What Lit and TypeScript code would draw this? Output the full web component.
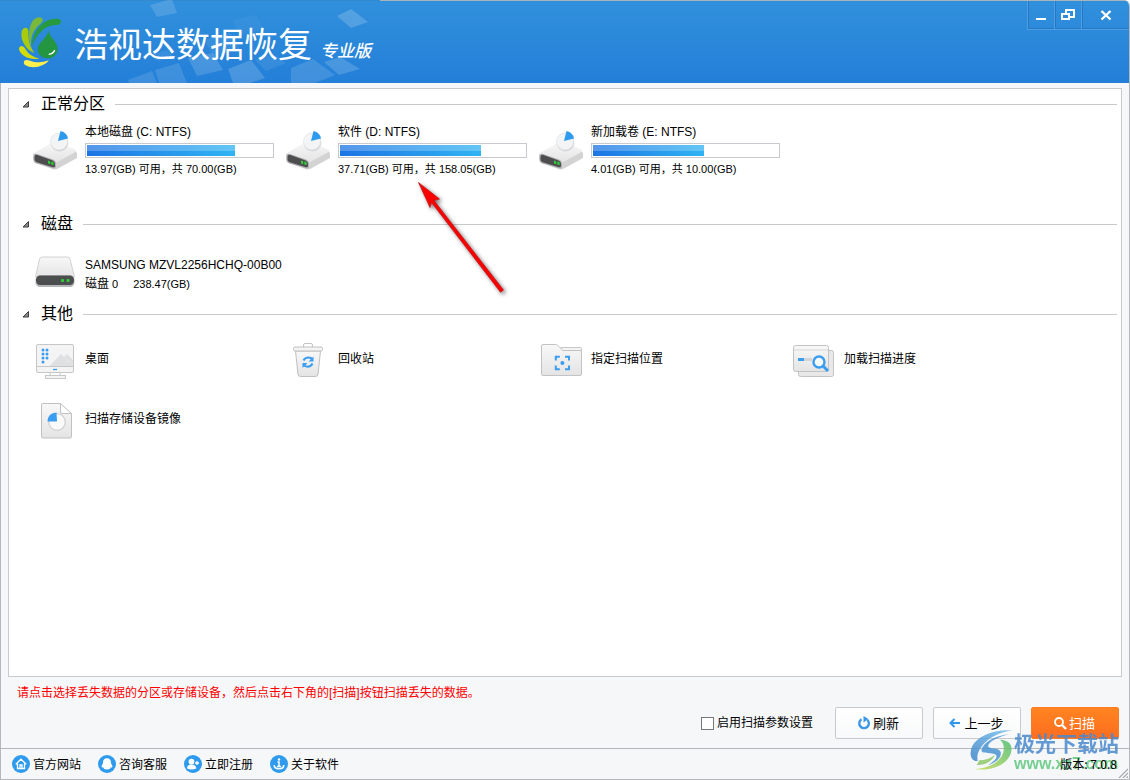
import { LitElement, html, css, svg } from "lit";
import { customElement, property } from "lit/decorators.js";

type IconName = "volume" | "disk" | "desktop" | "bin" | "folder" | "progress" | "image";

interface Volume {
  name: string;
  total: number;
  free: number;
}

const volumes: Volume[] = [
  { name: "本地磁盘 (C: NTFS)", total: 70, free: 13.97 },
  { name: "软件 (D: NTFS)", total: 158.05, free: 37.71 },
  { name: "新加载卷 (E: NTFS)", total: 10, free: 4.01 },
];

const others: { icon: IconName; label: string }[] = [
  { icon: "desktop", label: "桌面" },
  { icon: "bin", label: "回收站" },
  { icon: "folder", label: "指定扫描位置" },
  { icon: "progress", label: "加载扫描进度" },
  { icon: "image", label: "扫描存储设备镜像" },
];

const deviceIcons = {
  volume: svg`
    <path d="M0 24 20 13q2-1 4 0l18 8q2 1 2 3v4L25 38.500q-2 1.500-5 .8L3 33q-3-1.200-3-5z" fill="#d3d3d4"/>
    <path d="M1 23 21 11.500q1.500-.8 3.500 0L42 19.500q2.500 1 0 2.800L24.500 32Q22 33 19 32L2 26q-2.500-1.200-1-3z" fill="url(#top)"/>
    <path d="M.5 26.500q0-3.500 3.500-2.500l16 5.500q3 1.200 3 4.500v2.500q0 2.500-3 1.700L3.500 33.500Q.5 32.500.5 29.500z" fill="#b0b1b2"/>
    <path d="M1.500 27q0-3 3-2l14.500 5.200q3 1.200 3 4v1.500q0 2.200-3 1.400L4.500 32.500q-3-1-3-3.500z" fill="#4d4d4f"/>
    <path d="M15 30.500l2.200.7v3l-2.200-.7zM18.300 31.500l2.300.7v3l-2.300-.7z" fill="#2fce38"/>
    <ellipse cx="26.500" cy="13" rx="8.800" ry="8.500" fill="#cfd0d2" opacity=".8"/>
    <circle cx="26" cy="11.500" r="8.500" fill="#f3f4f5" stroke="#dcdddf" stroke-width=".6"/>
    <path d="M25 11 27.500 1q6.500 1.500 7.500 7.500z" fill="#2f9bee"/>`,
  disk: svg`
    <path d="M6.500 6q.7-2 3-2h24.500q2.500 0 3 2L41.500 24H2.500z" fill="url(#top)" stroke="#d2d2d3" stroke-width="1"/>
    <rect x="2.500" y="22.500" width="39" height="11.500" rx="4.500" fill="#b4b5b6"/>
    <rect x="3" y="22.500" width="38" height="9.500" rx="4.200" fill="#4c4d4f"/>
    <rect x="28" y="26" width="3" height="3" rx="1" fill="#2fce38"/>
    <rect x="33.500" y="26" width="3" height="3" rx="1" fill="#2fce38"/>`,
  desktop: svg`
    <rect x="3.500" y="6.500" width="37" height="28" rx="1.500" fill="#f4f4f5" stroke="#c6c7c9"/>
    <path d="M16 28.500 28 16l8 8 2-1 2 3v2.500zM31 19l3-3 6 6v4z" fill="#dfe0e2"/>
    <path d="M4 28.500h36M17 34.500v3.500h10v-3.500" fill="none" stroke="#c6c7c9"/>
    <rect x="12.500" y="37.500" width="20" height="3" fill="#f3f3f4" stroke="#c6c7c9"/>
    <path d="M20 31.500h4" stroke="#3a9df0" stroke-width="1.300"/>
    ${[12, 16, 20, 24].map((y) => svg`<circle cx="10" cy=${y} r="1.500" fill="#3a9df0"/>`)}
    ${[12, 16, 20].map((y) => svg`<circle cx="14" cy=${y} r="1.500" fill="#3a9df0"/>`)}`,
  bin: svg`
    <path d="M17.500 9V7q0-1.500 1.500-1.500h6q1.500 0 1.500 1.500v2" fill="none" stroke="#c2c3c5"/>
    <path d="M9.500 13 12 36.500q.3 2 2.500 2h15q2.200 0 2.500-2L34.500 13z" fill="url(#top)" stroke="#bfc0c2"/>
    <rect x="7.500" y="9" width="29" height="4" rx="1.500" fill="#f4f4f5" stroke="#bfc0c2"/>
    <path d="M17.500 22.500q1.500-3 5-3 2.500 0 4 2M26.500 25.500q-1.500 3.200-5 3.200-2.500 0-4-2" fill="none" stroke="#3a9df0" stroke-width="2"/>
    <path d="M27.500 18.500v5h-5zM16.500 30v-5h5z" fill="#3a9df0"/>`,
  folder: svg`
    <path d="M22 9.500h19q1.500 0 1.500 1.500v10h-20z" fill="#f4f4f5" stroke="#c6c7c9"/>
    <path d="M2.500 36.500V8q0-1.500 1.500-1.500h12.500q1.500 0 2.500 1.200L24 12.500h17q1.500 0 1.500 1.500v22q0 1.500-1.500 1.500H4q-1.500 0-1.500-1z" fill="url(#top)" stroke="#c2c3c5"/>
    <path d="M16.800 22.500v-3.700h4M26 18.800h4v3.700M30 27.500v3.700h-4M20.800 31.200h-4v-3.700" fill="none" stroke="#3a9df0" stroke-width="2"/>
    <circle cx="23.400" cy="25" r="2" fill="#3a9df0"/>`,
  progress: svg`
    <rect x="6.500" y="12.500" width="35" height="26" rx="2" fill="#e8e8e9" stroke="#c2c3c5"/>
    <rect x="1.500" y="7.500" width="35" height="26" rx="2" fill="url(#top)" stroke="#c2c3c5"/>
    <path d="M2 12h34" stroke="#d6d7d9"/>
    <path d="M6 21.500h6" stroke="#3a9df0" stroke-width="3"/>
    <path d="M12 21.500h8" stroke="#d3d4d6" stroke-width="3"/>
    <circle cx="27" cy="24" r="5.500" fill="#f8fafc" stroke="#3a9df0" stroke-width="2.400"/>
    <path d="M31 28l5 5" stroke="#3a9df0" stroke-width="3"/>`,
  image: svg`
    <path d="M10 5.500h17L38.500 16v22.500q0 1.500-1.500 1.500H10q-1.500 0-1.500-1.500V7q0-1.500 1.500-1.500z" fill="url(#top)" stroke="#bfc0c2"/>
    <path d="M27.500 5.500v8.500q0 1.500 1.500 1.500h9.500z" fill="#fff" stroke="#bfc0c2"/>
    <circle cx="24" cy="24" r="8.300" fill="#fafafb" stroke="#cfd0d2" stroke-width="1.300"/>
    <path d="M24 23.500h-9.500q.3-8.500 9-9z" fill="#3a9df0"/>`,
};

@customElement("device-icon")
export class DeviceIcon extends LitElement {
  @property() name: IconName = "volume";

  static styles = css`
    :host { display: block; flex: none; }
    .glyph { display: block; width: 44px; height: 42px; }
  `;

  render() {
    return html`<svg class="glyph" viewBox="0 0 44 42" aria-hidden="true">
      <defs>
        <linearGradient id="top" x1="0" y1="0" x2="0" y2="1">
          <stop offset="0" stop-color="#f8f8f8" />
          <stop offset="1" stop-color="#e4e4e5" />
        </linearGradient>
      </defs>
      ${deviceIcons[this.name]}
    </svg>`;
  }
}

@customElement("device-section")
export class DeviceSection extends LitElement {
  @property() heading = "";

  static styles = css`
    :host { display: block; }
    .heading {
      display: flex;
      align-items: center;
      height: 25px;
      margin: 0;
      padding: 0 4px 0 13px;
      font-size: 16px;
      font-weight: 400;
      line-height: 22px;
    }
    .toggle {
      display: flex;
      align-items: center;
      gap: 11px;
      padding: 0 0 2px;
      border: 0;
      background: none;
      color: #000;
      font: inherit;
    }
    .marker { display: block; width: 8px; height: 8px; }
    .rule { flex: 1; height: 1px; margin-left: 10px; background: #c9c9cb; }
    .grid {
      display: grid;
      grid-template-columns: repeat(auto-fill, 253px);
      padding-left: 24px;
    }
  `;

  render() {
    return html`
      <h2 class="heading">
        <button class="toggle" type="button" aria-expanded="true">
          <svg class="marker" viewBox="0 0 8 8" aria-hidden="true">
            <path d="M6.500 1.500V7H1z" fill="#8a8a8a" stroke="#3e3e3e" />
          </svg>
          ${this.heading}
        </button>
        <span class="rule"></span>
      </h2>
      <div class="grid"><slot></slot></div>
    `;
  }
}

const footLinks = [
  {
    label: "官方网站",
    glyph: svg`<path d="M3.800 9.200 9 4.200l5.200 5M5.500 8.500v5h7v-5M8 13.500V10h2v3.500" fill="none" stroke="#fff" stroke-width="1.300"/>`,
  },
  {
    label: "咨询客服",
    glyph: svg`<path d="M9 3.300c3 0 4 2.200 4 4.500 0 1.500 1.400 2.200 1.400 3.700 0 1.200-1.400 1-1.700.7-.3 1.300-1.200 2.300-3.700 2.300s-3.400-1-3.700-2.300c-.3.300-1.700.5-1.700-.7C3.600 10 5 9.300 5 7.800c0-2.300 1-4.500 4-4.500z" fill="#fff"/>`,
  },
  {
    label: "立即注册",
    glyph: svg`<circle cx="7.500" cy="6.600" r="2.900" fill="#fff"/><path d="M3 13.600q0-4 4.500-4t4.800 4q-4.600 1.700-9.300 0z" fill="#fff"/><path d="M13 5.500v5M10.500 8h5" stroke="#2f9bee" stroke-width="3"/><path d="M13 6v4M11 8h4" stroke="#fff" stroke-width="1.300"/>`,
  },
  {
    label: "关于软件",
    glyph: svg`<circle cx="9" cy="4.500" r="1.200" fill="#fff"/><path d="M7.500 7H9v4.500M7 11.500h4" fill="none" stroke="#fff" stroke-width="1.500"/><path d="M4.200 10q0 3.800 4.800 3.800t4.800-3.800" fill="none" stroke="#fff" stroke-width="1.500"/>`,
  },
];

@customElement("app-root")
export class AppRoot extends LitElement {
  static styles = css`
    :host {
      display: block;
      background: #fff;
      color: #000;
      font: 12px/18px "Liberation Sans", "Noto Sans CJK SC", sans-serif;
    }
    * { box-sizing: border-box; }
    .window {
      position: relative;
      display: flex;
      flex-direction: column;
      min-height: 100vh;
      border: solid #b5b7ba;
      border-width: 0 1px 1px 0;
      border-top-right-radius: 6px;
      background: #f5f7f9;
      overflow: hidden;
    }
    .banner {
      position: relative;
      display: flex;
      align-items: center;
      height: 83px;
      padding-left: 18px;
      border-top: 1px solid #a9b3bc;
      background: linear-gradient(#3190dc, #237fd8);
      color: #fff;
    }
    .tiles { position: absolute; left: 0; top: -1px; width: 380px; height: 83px; }
    .logo { position: relative; width: 44px; height: 52px; }
    .brand {
      position: relative;
      display: flex;
      align-items: baseline;
      gap: 8px;
      margin: 8px 0 0 12px;
      font-family: "Noto Sans CJK SC", sans-serif;
      font-size: 34px;
      line-height: 48px;
      font-weight: 400;
    }
    .edition { font-size: 17px; font-style: italic; font-weight: 500; }
    .controls {
      display: flex;
      align-self: flex-start;
      height: 29px;
      margin-left: auto;
      border-bottom: 1px solid #4d9fe2;
      box-shadow: inset 0 -1px #2678c6;
    }
    .control {
      display: grid;
      place-items: center;
      width: 27px;
      padding: 0;
      border: 0;
      border-left: 1px solid #4d9fe2;
      background: none;
      box-shadow: inset 1px 0 #2678c6;
    }
    .control.close { width: 48px; }
    .control svg { display: block; width: 14px; height: 14px; }
    .body {
      display: flex;
      flex: 1;
      flex-direction: column;
      padding: 5px 7px 9px;
      border-left: 1px solid #b5b7ba;
    }
    .panel {
      position: relative;
      flex: 1;
      padding-top: 3px;
      border: 1px solid #c8cacd;
      background: #fff;
    }
    .volumes { padding-bottom: 34px; }
    .disks { padding-bottom: 7px; }
    .item {
      display: flex;
      align-items: center;
      gap: 8px;
      padding: 0;
      border: 0;
      background: none;
      color: #000;
      font: inherit;
      text-align: left;
    }
    .item.volume { padding-top: 6px; }
    .item.disk { padding-top: 16px; }
    .item.other { height: 60px; padding-top: 4px; }
    .lines { display: grid; gap: 2px; }
    .item.disk .lines { gap: 1px; }
    .small { font-size: 11px; }
    .serial { display: flex; gap: 3px; }
    .size { margin-left: 12px; }
    .meter {
      display: block;
      width: 189px;
      height: 15px;
      padding: 1px;
      border: 1px solid #c9cacf;
      background: #fff;
    }
    .fill {
      display: block;
      height: 11px;
      background:
        linear-gradient(rgba(255, 255, 255, 0.24) 50%, transparent 50%),
        linear-gradient(90deg, #1d74e4, #30b4f3);
    }
    .arrow {
      position: absolute;
      left: 400px;
      top: 86px;
      width: 110px;
      height: 126px;
      pointer-events: none;
    }
    .hint { margin: 7px 0 0; padding-left: 9px; color: #f00; }
    .actions {
      display: flex;
      align-items: center;
      justify-content: flex-end;
      gap: 10px;
      margin: 5px 3px 0 0;
    }
    .option { display: flex; align-items: center; gap: 3px; margin-right: 12px; }
    .check {
      appearance: none;
      width: 13px;
      height: 13px;
      margin: 0;
      border: 1px solid #777;
      background: #fff;
    }
    .action {
      display: flex;
      align-items: center;
      justify-content: center;
      gap: 2px;
      width: 88px;
      height: 32px;
      padding: 0 2px 0 0;
      border: 1px solid #c8cacd;
      border-radius: 2px;
      background: linear-gradient(#fff, #f8f9fa);
      color: #000;
      font: 13px/18px "Noto Sans CJK SC", sans-serif;
    }
    .action.primary {
      border-color: #ff7b22;
      background: linear-gradient(#ff8420, #ff6d20);
      color: #fff;
    }
    .action svg { width: 14px; height: 14px; }
    .foot {
      display: flex;
      align-items: center;
      gap: 17px;
      height: 31px;
      padding: 0 12px 0 11px;
      border-top: 1px solid #b5b7ba;
      border-left: 1px solid #b5b7ba;
      font-family: "Noto Sans CJK SC", sans-serif;
    }
    .link {
      display: flex;
      align-items: center;
      gap: 3px;
      color: #000;
      text-decoration: none;
    }
    .link svg { width: 18px; height: 18px; }
    .version { position: relative; z-index: 1; margin-left: auto; }
    .grip { position: absolute; right: 1px; bottom: 1px; width: 10px; height: 10px; }
    .stamp {
      position: absolute;
      right: 10px;
      bottom: 6px;
      display: flex;
      align-items: center;
      pointer-events: none;
      opacity: 0.85;
    }
    .swirl { width: 44px; height: 44px; }
    .stamp-text { display: grid; font-family: "Noto Sans CJK SC", sans-serif; }
    .stamp-name { color: #4a8ace; font-size: 21px; line-height: 26px; font-weight: 700; }
    .stamp-site { color: #5fc87d; font: 700 16px/18px "Liberation Sans", sans-serif; }
  `;

  render() {
    return html`
      <div class="window">
        <header class="banner">
          <svg class="tiles" viewBox="0 0 380 83" aria-hidden="true">
            <path d="M0 0h380v1H0z" fill="#3388cf" />
            <g fill="#fff">
              <path d="M150 5 172-1l5 14-20 4z" opacity=".14" />
              <path d="M337 16 351 9l17 13-17 6z" opacity=".18" />
              <path d="M128 80l24-9 5 12h-28z" opacity=".12" />
              <path d="M155 70l24-7 8 20h-28z" opacity=".12" />
              <path d="M151 55l16-5 8 8-18 3z" opacity=".08" />
              <path d="M188 58l25-5 10 17-26 6z" opacity=".15" />
              <path d="M205 40l25-7 10 16-27 7z" opacity=".07" />
              <path d="M228 69l23-9 14 18-15 5h-17z" opacity=".17" />
              <path d="M255 60l18-6 13 9-20 8z" opacity=".08" />
              <path d="M291 68l22-9 22 16-20 8h-24z" opacity=".13" />
              <path d="M324 62l16-5 20 12-21 6z" opacity=".16" />
              <path d="M232 20l24-5 8 14-24 7z" opacity=".04" />
            </g>
          </svg>
          <svg class="logo" viewBox="54 48 132 156" aria-hidden="true">
            <path d="M96 138C99 90 130 55 170 56q14 1 13 11-2 9-18 8c-28 1-52 22-69 63z" fill="#27993e" />
            <path d="M93 138C82 112 86 62 110 53q13-4 18 4 3 8-11 18c-17 15-25 36-24 63z" fill="#79b839" />
            <path d="M103 159C78 150 58 118 66 91q4-10 14-7 6 3 5 16c0 24 6 42 18 59z" fill="#a8cb0e" />
            <path d="M118 176C90 181 61 168 57 147q0-9 9-9 7 1 12 12 12 20 40 26z" fill="#d2dc0b" />
            <path d="M147 181c-16 21-52 27-73 13q-6-8 1-13 5-3 15 1c20 7 36 6 57-1z" fill="#fbf04d" />
            <path d="M145 90c3 23 28 35 28 57 0 17-13 28-29 28s-31-10-31-27c0-22 30-32 32-58z" fill="#249642" />
            <path d="M146 163q15-2 18-13" fill="none" stroke="#fff" stroke-width="4" />
          </svg>
          <h1 class="brand">浩视达数据恢复<span class="edition">专业版</span></h1>
          <div class="controls">
            <button class="control" type="button" aria-label="最小化">
              <svg viewBox="0 0 14 14"><path d="M2 11h10" stroke="#fff" stroke-width="2" /></svg>
            </button>
            <button class="control" type="button" aria-label="还原">
              <svg viewBox="0 0 14 14">
                <path d="M5 6V2h8v7H9M1 6h7v5H1z" fill="none" stroke="#fff" stroke-width="2" />
              </svg>
            </button>
            <button class="control close" type="button" aria-label="关闭">
              <svg viewBox="0 0 14 14"><path d="M2.500 3l9 8.500M11.500 3l-9 8.500" stroke="#fff" stroke-width="2.400" /></svg>
            </button>
          </div>
        </header>

        <main class="body">
          <div class="panel">
            <device-section class="volumes" heading="正常分区">
              ${volumes.map(
                (v) => html`
                  <button class="item volume" type="button">
                    <device-icon name="volume"></device-icon>
                    <span class="lines">
                      <span>${v.name}</span>
                      <span class="meter">
                        <span class="fill" style="width: ${Math.round((1 - v.free / v.total) * 100)}%"></span>
                      </span>
                      <span class="small">${v.free.toFixed(2)}(GB) 可用，共 ${v.total.toFixed(2)}(GB)</span>
                    </span>
                  </button>
                `,
              )}
            </device-section>
            <device-section class="disks" heading="磁盘">
              <button class="item disk" type="button">
                <device-icon name="disk"></device-icon>
                <span class="lines">
                  <span>SAMSUNG MZVL2256HCHQ-00B00</span>
                  <span class="serial">
                    <span>磁盘</span><span class="small">0</span><span class="small size">238.47(GB)</span>
                  </span>
                </span>
              </button>
            </device-section>
            <device-section class="others" heading="其他">
              ${others.map(
                (o) => html`
                  <button class="item other" type="button">
                    <device-icon name=${o.icon}></device-icon>
                    <span>${o.label}</span>
                  </button>
                `,
              )}
            </device-section>
            <svg class="arrow" viewBox="0 0 110 126" aria-hidden="true">
              <defs>
                <filter id="shade" x="-20%" y="-20%" width="140%" height="140%">
                  <feDropShadow dx="2" dy="2" stdDeviation="2" flood-color="#000" flood-opacity=".55" />
                </filter>
              </defs>
              <path
                d="M9.500 7.500 30.500 24l-5.500 1.500L94.500 115l-3 2.200L22.500 27.500 21 32.500z"
                fill="#fb0606" stroke="#b01010" stroke-width=".7" filter="url(#shade)"
              />
            </svg>
          </div>
          <p class="hint">请点击选择丢失数据的分区或存储设备，然后点击右下角的[扫描]按钮扫描丢失的数据。</p>
          <div class="actions">
            <label class="option"><input class="check" type="checkbox" />启用扫描参数设置</label>
            <button class="action" type="button">
              <svg viewBox="0 0 14 14" aria-hidden="true">
                <path d="M4.500 3.300A4.800 4.800 0 1 0 10.500 4" fill="none" stroke="#3a97e8" stroke-width="2.400" />
                <path d="M6.500 0v6.500l5-3.600z" fill="#3a97e8" />
              </svg>
              刷新
            </button>
            <button class="action" type="button">
              <svg viewBox="0 0 14 14" aria-hidden="true">
                <path d="M12 7H3M6.500 3 2.500 7l4 4" fill="none" stroke="#2f97ee" stroke-width="2" />
              </svg>
              上一步
            </button>
            <button class="action primary" type="button">
              <svg viewBox="0 0 14 14" aria-hidden="true">
                <circle cx="6" cy="6" r="4" fill="none" stroke="#fff" stroke-width="1.800" />
                <path d="M9 9l4 4" stroke="#fff" stroke-width="2.400" />
              </svg>
              扫描
            </button>
          </div>
        </main>

        <footer class="foot">
          ${footLinks.map(
            (l) => html`<a class="link" href="#"
              ><svg viewBox="0 0 18 18" aria-hidden="true"><circle cx="9" cy="9" r="9" fill="#2f9bee" />${l.glyph}</svg
              >${l.label}</a
            >`,
          )}
          <span class="version">版本: 7.0.8</span>
        </footer>

        <div class="stamp">
          <svg class="swirl" viewBox="150 148 132 132" aria-hidden="true">
            <defs>
              <linearGradient id="blue" x1="1" y1="0" x2="0" y2="1">
                <stop offset="0" stop-color="#79c4ee" />
                <stop offset="1" stop-color="#3f83c9" />
              </linearGradient>
              <linearGradient id="green" x1="1" y1="0" x2="0" y2="1">
                <stop offset="0" stop-color="#4fbd74" />
                <stop offset="1" stop-color="#c8dc55" />
              </linearGradient>
            </defs>
            <path d="M280 152c-60-4-116 18-127 58-5 22 5 36 20 34-8-36 36-84 107-92z" fill="url(#blue)" />
            <path d="M268 164c-44 4-78 24-84 48 2 14 34 4 44 14 6 8-6 20-24 30 28-8 42-26 38-40-8-14-34-6-38-16 2-14 30-28 64-36z" fill="#4b95d2" />
            <path d="M240 180c30 2 40 18 32 42-12 34-60 54-108 46 44-2 78-22 86-50 4-16 0-30-10-38z" fill="url(#green)" />
            <path d="M178 242c16 0 34-6 46-16-6 18-30 32-54 30z" fill="#8fc96a" />
          </svg>
          <span class="stamp-text">
            <span class="stamp-name">极光下载站</span>
            <span class="stamp-site">www.xz7.com</span>
          </span>
        </div>
        <svg class="grip" viewBox="0 0 10 10" aria-hidden="true">
          <path d="M1 10 10 1M5 10l5-5M8.500 10 10 8.500" stroke="#a5a7aa" stroke-width="1.200" />
        </svg>
      </div>
    `;
  }
}
